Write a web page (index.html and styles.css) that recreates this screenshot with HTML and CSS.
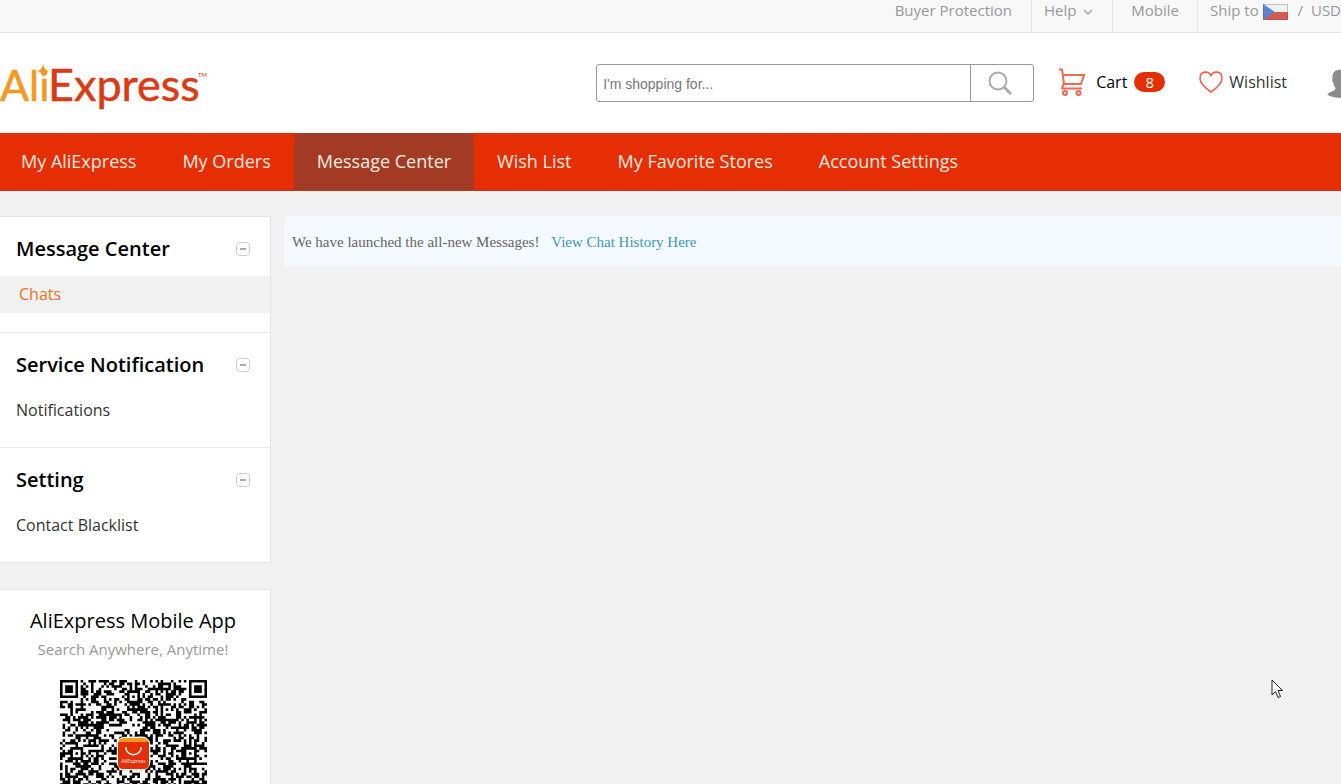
FILE: index.html
```html
<!DOCTYPE html>
<html lang="en">
  <head>
    <meta charset="UTF-8" />
    <meta name="viewport" content="width=device-width, initial-scale=1.0" />
    <title>Message Center - AliExpress</title>
    <link rel="stylesheet" href="styles.css">
  </head>
  <body>
    <div class="top-bar">
      <a class="top-link" href="#">Buyer Protection</a>
      <a class="top-link help" href="#">Help
        <svg width="10" height="6" viewBox="0 0 10 6"><path d="M1 1l4 4 4-4" fill="none" stroke="#bbb" stroke-width="2" /></svg>
      </a>
      <a class="top-link mobile" href="#">Mobile</a>
      <a class="top-link ship" href="#">Ship to
        <svg class="flag" width="25" height="16" viewBox="0 0 25 16">
          <rect width="25" height="8" fill="#f1f1f3" />
          <rect y="8" width="25" height="8" fill="#d65b4e" />
          <path d="M0 0l12 8-12 8z" fill="#5b83d3" />
          <path d="M.5 .5h24v15H.5z" fill="none" stroke="#5a4a5a" stroke-opacity=".3" />
        </svg>
        <span class="slash">/</span> <span>USD</span>
      </a>
    </div>

    <header class="header">
      <a class="logo" href="#" aria-label="AliExpress">
        <svg width="210" height="62" viewBox="0 0 210 62">
          <text class="logo-ali" x="0" y="49">Ali</text>
          <text class="logo-express" x="48" y="49">Express</text>
          <path d="M43 12q1 6 6 7-5 1-6 6-1-5-6-6 5-1 6-7z" fill="#f7971d" />
          <text class="logo-tm" x="198" y="25">TM</text>
        </svg>
      </a>
      <form class="search">
        <input type="text" placeholder="I'm shopping for..." aria-label="Search" />
        <button type="button" aria-label="Search">
          <svg width="24" height="24" viewBox="0 0 24 24" fill="none" stroke="#aaa" stroke-width="2">
            <circle cx="10" cy="10" r="8.5" />
            <path d="M16 16l7 7" stroke-width="3" />
          </svg>
        </button>
      </form>
      <a class="cart" href="#">
        <svg width="26" height="28" viewBox="0 0 26 28" fill="none" stroke="#ee6a50" stroke-width="2">
          <path d="M0 1.500h3L5 16h17L25 7H4M4.500 16L3 20.500H23" />
          <circle cx="6" cy="25" r="2" />
          <circle cx="19.500" cy="25" r="2" />
        </svg>
        <span>Cart</span>
        <span class="badge">8</span>
      </a>
      <a class="wishlist" href="#">
        <svg width="24" height="22" viewBox="0 0 24 22" fill="none" stroke="#e9654b" stroke-width="1.6">
          <path d="M12 4.500C10 0 1 -1 1 7.500C1 13 7 17.500 12 21C17 17.500 23 13 23 7.500C23 -1 14 0 12 4.500z" />
        </svg>
        <span>Wishlist</span>
      </a>
      <svg class="avatar" width="15" height="30" viewBox="0 0 15 30">
        <path d="M15 2C9 1 6 5 6.500 11c-1 1 0 3 1 4 0 2 1 4 2 5 0 2-2 3-5 4-2 1-3 2-3 3 4 2 9 3 13.500 3z" fill="#8c8c8c" />
      </svg>
    </header>

    <nav class="nav">
      <a href="#">My AliExpress</a>
      <a href="#">My Orders</a>
      <a class="active" href="#">Message Center</a>
      <a href="#">Wish List</a>
      <a href="#">My Favorite Stores</a>
      <a href="#">Account Settings</a>
    </nav>

    <div class="container">
      <aside class="sidebar">
        <div class="card">
          <section>
            <h2>Message Center <button class="toggle" aria-label="Collapse"></button></h2>
            <a class="item selected" href="#">Chats</a>
          </section>
          <section>
            <h2>Service Notification <button class="toggle" aria-label="Collapse"></button></h2>
            <a class="item" href="#">Notifications</a>
          </section>
          <section>
            <h2>Setting <button class="toggle" aria-label="Collapse"></button></h2>
            <a class="item" href="#">Contact Blacklist</a>
          </section>
        </div>
        <div class="card app">
          <h3>AliExpress Mobile App</h3>
          <p>Search Anywhere, Anytime!</p>
          <svg class="qr" viewBox="0 0 57 57">
            <path id="qr-modules" />
            <rect x="22" y="22" width="13" height="13" rx="3" fill="#fff" />
            <rect x="22.500" y="22.500" width="12" height="12" rx="2" fill="#f7981d" />
            <path d="M22.500 24h12v8.500a2 2 0 0 1-2 2h-8a2 2 0 0 1-2-2z" fill="#e62e04" />
            <path d="M25.500 26a3 3 0 0 0 6 0" fill="none" stroke="#fff" stroke-width=".6" />
            <text x="28.500" y="32.200">AliExpress</text>
          </svg>
        </div>
      </aside>
      <main>
        <div class="notice">We have launched the all-new Messages! <a href="#">View Chat History Here</a></div>
      </main>
    </div>

    <svg class="cursor" width="13" height="20" viewBox="0 0 13 20">
      <path d="M1 1v15l3.500-3.500 2.500 6 2.500-1-2.500-6h4.500z" fill="#fff" stroke="#222" />
    </svg>
    <script src="qr.js"></script>
  </body>
</html>
```
FILE: styles.css
```css
* {
  box-sizing: border-box;
}
/* the page scrolls without a visible scrollbar */
html {
  scrollbar-width: none;
}
body {
  margin: 0;
  background: #f1f1f1;
  font-family: "Open Sans", sans-serif;
  font-size: 16px;
  color: #333;
}
a {
  color: inherit;
  text-decoration: none;
}
svg {
  flex: none;
}

/* top bar */
.top-bar {
  display: flex;
  justify-content: flex-end;
  height: 33px;
  background: #f8f8f8;
  border-bottom: 1px solid #e6e6e6;
  font-size: 15px;
  line-height: 20px;
  color: #999;
  white-space: nowrap;
}
.top-link {
  padding: 0 19px;
}
.top-link + .top-link {
  border-left: 1px solid #e6e6e6;
}
.top-link.help {
  padding-left: 12px;
}
.help svg {
  margin-left: 3px;
  vertical-align: 1px;
}
.top-link.mobile {
  padding: 0 18px;
}
.top-link.ship {
  padding: 0 0 0 12px;
}
.flag {
  vertical-align: -4px;
}
.slash {
  margin: 0 4px 0 6px;
}

/* header */
.header {
  display: flex;
  align-items: center;
  height: 100px;
  background: #fff;
}
.logo {
  margin-right: auto;
}
.logo svg {
  display: block;
}
.logo text {
  font-family: Lato, sans-serif;
  font-size: 45px;
}
.logo .logo-ali {
  fill: #f7971d;
  stroke: #f7971d;
  stroke-width: 0.5px;
  font-size: 43px;
}
.logo .logo-express {
  fill: #dc3a14;
  stroke: #dc3a14;
  stroke-width: 0.5px;
}
.logo .logo-tm {
  fill: #dc3a14;
  font-size: 6px;
}
.search {
  display: flex;
  width: 438px;
  height: 38px;
  border: 1px solid #999;
  border-radius: 3px;
}
.search input {
  flex: 1;
  min-width: 0;
  padding: 2px 6px 0;
  border: 0;
  background: none;
  outline: none;
  font: 14px "Liberation Sans", sans-serif;
}
.search input::placeholder {
  color: #777;
}
.search button {
  width: 63px;
  padding: 0 4px 0 0;
  border: 0;
  border-left: 1px solid #999;
  background: none;
}
.search svg {
  display: block;
  margin: auto;
}
.cart,
.wishlist {
  display: flex;
  align-items: center;
  padding-bottom: 2px;
}
.cart {
  margin: 0 34px 0 25px;
  color: #000;
}
.cart svg {
  margin-right: 11px;
}
.badge {
  width: 31px;
  height: 20px;
  margin-left: 7px;
  border-radius: 10px;
  background: #e62e04;
  color: #fff;
  font-size: 15px;
  line-height: 20px;
  text-align: center;
}
.wishlist svg {
  margin-right: 6px;
}
.avatar {
  margin-left: 39px;
}

/* main navigation */
.nav {
  display: flex;
  height: 58px;
  background: #e62e04;
  border-bottom: 1px solid #b83a1c;
  color: #ffebe0;
  font-size: 18px;
  line-height: 57px;
  white-space: nowrap;
}
.nav a {
  padding: 0 23px;
}
.nav a:first-child {
  padding-left: 21px;
}
.nav .active {
  background: #a33b24;
}

/* content */
.container {
  display: flex;
  gap: 13px;
  padding-top: 25px;
}
.sidebar {
  flex: 0 0 271px;
}
.card {
  margin-bottom: 26px;
  background: #fff;
  border: 1px solid #e4e4e4;
  border-left: 0;
}
.card section {
  padding-bottom: 19px;
}
.card section + section {
  padding-bottom: 18px;
  border-top: 1px solid #ebebeb;
}
.card h2 {
  display: flex;
  justify-content: space-between;
  align-items: center;
  height: 59px;
  margin: 0;
  padding: 4px 20px 0 16px;
  color: #000;
  font-size: 20px;
  font-weight: 600;
}
.toggle {
  display: flex;
  align-items: center;
  justify-content: center;
  width: 14px;
  height: 14px;
  padding: 0;
  border: 1px solid #ccc;
  border-radius: 4px;
  background: #fff;
}
.toggle::before {
  content: "";
  width: 6px;
  height: 2px;
  background: #aaa;
}
.item {
  display: block;
  height: 37px;
  padding-left: 16px;
  line-height: 36px;
}
.item.selected {
  padding-left: 19px;
  background: #f1f1f1;
  color: #f07020;
}
.app {
  padding-top: 16px;
  text-align: center;
}
.app h3 {
  margin: 0;
  padding-right: 4px;
  color: #000;
  font-size: 20px;
  font-weight: 400;
  line-height: 30px;
}
.app p {
  margin: 0 0 18px;
  padding-right: 4px;
  color: #999;
  font-size: 15px;
  line-height: 26px;
}
.qr {
  width: 147px;
  margin-right: 3px;
}
.qr text {
  fill: #fff;
  font-size: 2px;
  text-anchor: middle;
}
main {
  flex: 1;
}
.notice {
  height: 50px;
  padding: 0 8px;
  border-radius: 4px 0 0 4px;
  background: #f3f9fe;
  color: #666;
  font: 15px/52px "Liberation Serif", serif;
}
.notice a {
  margin-left: 8px;
  color: #3e9ab5;
}
.cursor {
  position: absolute;
  left: 1271px;
  top: 679px;
}
```
FILE: qr.js
```js
// Fill the code with modules, then stamp the finder and alignment squares
const size = 57;
const grid = [];
let seed = 20197;

for (let y = 0; y < size; y++) {
  grid.push([]);
  for (let x = 0; x < size; x++) {
    seed = (seed * 1103515245 + 12345) % 2147483648;
    grid[y].push(seed / 2147483648 < 0.5);
  }
}

function stamp(cx, cy, radius, rings) {
  for (let y = cy - radius; y <= cy + radius; y++) {
    for (let x = cx - radius; x <= cx + radius; x++) {
      if (x < 0 || y < 0 || x >= size || y >= size) continue;
      const distance = Math.max(Math.abs(x - cx), Math.abs(y - cy));
      grid[y][x] = rings.includes(distance);
    }
  }
}

stamp(3, 3, 4, [0, 1, 3]);
stamp(size - 4, 3, 4, [0, 1, 3]);
stamp(3, size - 4, 4, [0, 1, 3]);
[[28, 6], [6, 28], [50, 28], [28, 50], [50, 50]].forEach(([x, y]) => {
  stamp(x, y, 2, [0, 2]);
});

let d = "";
grid.forEach((row, y) => {
  row.forEach((on, x) => {
    if (on) d += `M${x} ${y}h1v1h-1z`;
  });
});
document.getElementById("qr-modules").setAttribute("d", d);
```
